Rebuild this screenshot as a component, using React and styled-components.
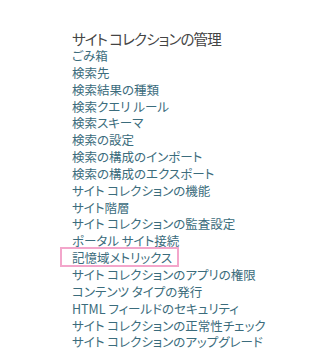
import React from 'react';
import styled, { createGlobalStyle } from 'styled-components';

const GlobalStyle = createGlobalStyle`
  html, body {
    margin: 0;
    padding: 0;
    background: #ffffff;
  }
  body {
    font-family: "Noto Sans CJK JP", "Noto Sans", sans-serif;
    font-feature-settings: "palt";
  }
`;

const Page = styled.div`
  padding: 29px 0 0 72px;
`;

const Title = styled.h2`
  margin: 0;
  font-size: 14.5px;
  font-weight: 400;
  line-height: 19px;
  letter-spacing: -0.9px;
  color: #444444;
`;

const List = styled.ul`
  margin: 0;
  padding: 0;
  list-style: none;
`;

const Item = styled.li`
  font-size: 12.5px;
  line-height: 16.85px;
  height: 16.85px;
`;

const Link = styled.a`
  color: #3b6c7c;
  text-decoration: none;
  white-space: nowrap;
  display: inline-block;
  ${({ $marked }) =>
    $marked &&
    `
    border: 2px solid #f3a6cb;
    margin: -3px 0 0 -12px;
    padding: 0 5px 0 10px;
    line-height: 18px;
    height: 15.85px;
  `}
`;

const links = [
  'ごみ箱',
  '検索先',
  '検索結果の種類',
  '検索クエリ ルール',
  '検索スキーマ',
  '検索の設定',
  '検索の構成のインポート',
  '検索の構成のエクスポート',
  'サイト コレクションの機能',
  'サイト階層',
  'サイト コレクションの監査設定',
  'ポータル サイト接続',
  '記憶域メトリックス',
  'サイト コレクションのアプリの権限',
  'コンテンツ タイプの発行',
  'HTML フィールドのセキュリティ',
  'サイト コレクションの正常性チェック',
  'サイト コレクションのアップグレード',
];

export default function App() {
  return (
    <Page>
      <GlobalStyle />
      <Title>サイト コレクションの管理</Title>
      <List>
        {links.map((text) => (
          <Item key={text}>
            <Link href="#" $marked={text === '記憶域メトリックス'}>
              {text}
            </Link>
          </Item>
        ))}
      </List>
    </Page>
  );
}
